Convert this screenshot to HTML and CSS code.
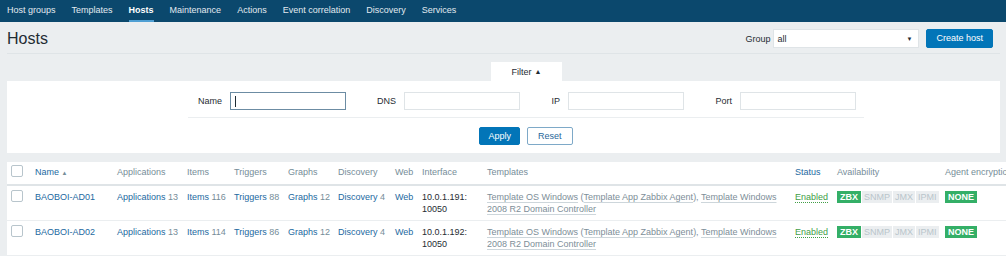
FILE: index.html
```html
<!DOCTYPE html>
<html lang="en">
<head>
<meta charset="utf-8">
<title>Hosts</title>
<link rel="stylesheet" href="styles.css">
</head>
<body>
<nav class="topnav">
  <a href="#">Host groups</a>
  <a href="#">Templates</a>
  <a href="#" class="active">Hosts</a>
  <a href="#">Maintenance</a>
  <a href="#">Actions</a>
  <a href="#">Event correlation</a>
  <a href="#">Discovery</a>
  <a href="#">Services</a>
</nav>
<main class="page">
  <header class="page-header">
    <h1>Hosts</h1>
    <div class="header-controls">
      <span class="ctl-label">Group</span>
      <div class="select"><span>all</span><span class="select-arrow">▼</span></div>
      <button class="btn">Create host</button>
    </div>
  </header>

  <section class="filter">
    <div class="filter-tabs"><span class="filter-tab">Filter <span class="tri">▲</span></span></div>
    <div class="filter-body">
      <div class="filter-fields">
        <label class="field f1"><span class="lbl">Name</span><span class="input focus"><span class="caret"></span></span></label>
        <label class="field f2"><span class="lbl">DNS</span><span class="input"></span></label>
        <label class="field f3"><span class="lbl">IP</span><span class="input"></span></label>
        <label class="field f4"><span class="lbl">Port</span><span class="input"></span></label>
      </div>
      <div class="filter-buttons">
        <button class="btn">Apply</button>
        <button class="btn btn-alt">Reset</button>
      </div>
    </div>
  </section>

  <div class="table-wrap">
    <table class="list">
      <colgroup>
        <col class="c-cb"><col class="c-name"><col class="c-apps"><col class="c-items">
        <col class="c-trig"><col class="c-graphs"><col class="c-disc"><col class="c-web">
        <col class="c-if"><col class="c-tpl"><col class="c-status"><col class="c-avail">
        <col class="c-enc">
      </colgroup>
      <thead>
        <tr>
          <th><span class="cb"></span></th>
          <th><a href="#" class="link">Name <span class="sort">▲</span></a></th>
          <th>Applications</th>
          <th>Items</th>
          <th>Triggers</th>
          <th>Graphs</th>
          <th>Discovery</th>
          <th>Web</th>
          <th>Interface</th>
          <th>Templates</th>
          <th><a href="#" class="link">Status</a></th>
          <th>Availability</th>
          <th>Agent encryption</th>
        </tr>
      </thead>
      <tbody>
        <tr>
          <td><span class="cb"></span></td>
          <td><a href="#" class="link">BAOBOI-AD01</a></td>
          <td><a href="#" class="link">Applications</a> <sup>13</sup></td>
          <td><a href="#" class="link">Items</a> <sup>116</sup></td>
          <td><a href="#" class="link">Triggers</a> <sup>88</sup></td>
          <td><a href="#" class="link">Graphs</a> <sup>12</sup></td>
          <td><a href="#" class="link">Discovery</a> <sup>4</sup></td>
          <td><a href="#" class="link">Web</a></td>
          <td class="wrap">10.0.1.191: 10050</td>
          <td class="wrap tpl"><a href="#">Template OS Windows</a> (<a href="#">Template App Zabbix Agent</a>), <a href="#">Template Windows 2008 R2 Domain Controller</a></td>
          <td><a href="#" class="enabled">Enabled</a></td>
          <td><span class="avail"><span class="st green">ZBX</span><span class="st grey">SNMP</span><span class="st grey">JMX</span><span class="st grey">IPMI</span></span></td>
          <td><span class="st green">NONE</span></td>
        </tr>
        <tr>
          <td><span class="cb"></span></td>
          <td><a href="#" class="link">BAOBOI-AD02</a></td>
          <td><a href="#" class="link">Applications</a> <sup>13</sup></td>
          <td><a href="#" class="link">Items</a> <sup>114</sup></td>
          <td><a href="#" class="link">Triggers</a> <sup>86</sup></td>
          <td><a href="#" class="link">Graphs</a> <sup>12</sup></td>
          <td><a href="#" class="link">Discovery</a> <sup>4</sup></td>
          <td><a href="#" class="link">Web</a></td>
          <td class="wrap">10.0.1.192: 10050</td>
          <td class="wrap tpl"><a href="#">Template OS Windows</a> (<a href="#">Template App Zabbix Agent</a>), <a href="#">Template Windows 2008 R2 Domain Controller</a></td>
          <td><a href="#" class="enabled">Enabled</a></td>
          <td><span class="avail"><span class="st green">ZBX</span><span class="st grey">SNMP</span><span class="st grey">JMX</span><span class="st grey">IPMI</span></span></td>
          <td><span class="st green">NONE</span></td>
        </tr>
      </tbody>
    </table>
  </div>
</main>
</body>
</html>
```

FILE: styles.css
```css
html, body {
  margin: 0;
  padding: 0;
  overflow: hidden;
}
body {
  width: 1006px;
  height: 256px;
  background: #ebeef0;
  font-family: "Liberation Sans", Arial, sans-serif;
  font-size: 9px;
  line-height: 12px;
  color: #1f2c33;
}
a { text-decoration: none; }

/* top navigation */
.topnav {
  display: flex;
  gap: 16px;
  height: 22px;
  padding-left: 7px;
  background: #0b486d;
}
.topnav a {
  display: flex;
  align-items: center;
  height: 22px;
  box-sizing: border-box;
  border-bottom: 2px solid transparent;
  color: #e2eaf0;
}
.topnav a.active {
  color: #ffffff;
  font-weight: bold;
  border-bottom-color: #4f9fd3;
}

.page {
  padding: 0 6px 0 7px;
}

/* header */
.page-header {
  display: flex;
  justify-content: space-between;
  align-items: center;
  padding: 7px 7px 5px 0;
  border-bottom: 1px solid #dfe4e7;
}
.page-header h1 {
  margin: 0;
  font-size: 16px;
  line-height: 19px;
  font-weight: normal;
  color: #1f2c33;
}
.header-controls {
  display: flex;
  align-items: center;
}
.ctl-label {
  margin-right: 3px;
  color: #1f2c33;
}
.select {
  display: flex;
  justify-content: space-between;
  align-items: center;
  width: 146px;
  height: 19px;
  box-sizing: border-box;
  padding: 0 6px 0 3px;
  background: #fff;
  border: 1px solid #dfe4e7;
  margin-right: 7px;
}
.select-arrow { font-size: 6px; color: #1f2c33; }

.btn {
  height: 19px;
  padding: 0 9px;
  border: 1px solid #0275b8;
  border-radius: 2px;
  background: #0275b8;
  color: #fff;
  font-family: inherit;
  font-size: 9px;
  line-height: 17px;
  cursor: pointer;
}
.btn-alt {
  background: #fff;
  color: #28679a;
  border-color: #7ea9c8;
}

/* filter */
.filter {
  margin-top: 8px;
}
.filter-tabs {
  display: flex;
  padding-left: 484px;
}
.filter-tab {
  display: flex;
  align-items: center;
  justify-content: center;
  width: 71px;
  height: 19px;
  background: #fff;
  color: #1f2c33;
}
.filter-tab .tri { font-size: 7px; margin-left: 3px; }
.filter-body {
  background: #fff;
  padding-bottom: 8px;
}
.filter-fields {
  display: flex;
  margin-left: 181px;
  width: 676px;
  padding: 11px 0 7px;
  border-bottom: 1px solid #ebeef0;
}
.field {
  display: flex;
  align-items: center;
}
.field .lbl {
  text-align: right;
  margin-right: 8px;
  color: #1f2c33;
}
.f1 .lbl { width: 34px; }
.f2 .lbl { width: 50px; }
.f3 .lbl { width: 40px; }
.f4 .lbl { width: 48px; }
.input {
  display: flex;
  align-items: center;
  width: 116px;
  height: 18px;
  box-sizing: border-box;
  border: 1px solid #dfe4e7;
  background: #fff;
}
.input.focus { border-color: #6c8ca3; }
.caret {
  display: block;
  width: 1px;
  height: 11px;
  margin-left: 4px;
  background: #1f2c33;
}
.filter-buttons {
  display: flex;
  justify-content: center;
  gap: 7px;
  margin-left: 181px;
  width: 676px;
  margin-top: 9px;
}
.filter-buttons .btn { height: 18px; padding: 0 8px; line-height: 16px; }
.filter-buttons .btn-alt { padding: 0 10px; }

/* table */
.table-wrap {
  margin-top: 9px;
  margin-right: -6px;
  overflow: hidden;
}
.list {
  width: 1074px;
  table-layout: fixed;
  border-collapse: collapse;
  background: #fff;
}
.c-cb { width: 24px; }
.c-name { width: 82px; }
.c-apps { width: 70px; }
.c-items { width: 47px; }
.c-trig { width: 54px; }
.c-graphs { width: 50px; }
.c-disc { width: 57px; }
.c-web { width: 27px; }
.c-if { width: 65px; }
.c-tpl { width: 308px; }
.c-status { width: 42px; }
.c-avail { width: 108px; }
.c-enc { width: 140px; }
.list th, .list td {
  padding: 5px 4px;
  text-align: left;
  vertical-align: top;
  line-height: 12px;
  white-space: nowrap;
}
.list td.wrap { white-space: normal; }
.list th {
  padding-top: 4px;
  font-weight: normal;
  color: #768d99;
  border-bottom: 2px solid #dfe4e7;
}
.list td {
  border-bottom: 1px solid #ebeef0;
}
.link { color: #23699f; }
.sort { font-size: 6px; color: #768d99; }
sup {
  vertical-align: baseline;
  font-size: 9px;
  color: #768d99;
}
.cb {
  display: block;
  width: 12px;
  height: 12px;
  box-sizing: border-box;
  border: 1px solid #b8c5cc;
  border-radius: 2px;
  background: #fff;
  margin-top: -1px;
}
.tpl, .tpl a { color: #7d8e98; }
.tpl a {
  text-decoration: underline;
  text-decoration-color: #cdd6db;
  text-underline-offset: 2px;
}
.enabled {
  color: #429e47;
  text-decoration: underline dotted #429e47;
  text-underline-offset: 2px;
}
.avail { display: inline-flex; }
.st {
  display: inline-block;
  height: 12px;
  line-height: 12px;
  padding: 0 3px;
  font-size: 9px;
}
.st.green {
  background: #34af67;
  color: #fff;
  font-weight: bold;
}
.st.grey {
  background: #ebeef0;
  color: #b9c5cb;
  padding: 0 2px;
  border-left: 1px solid #fff;
}
```
